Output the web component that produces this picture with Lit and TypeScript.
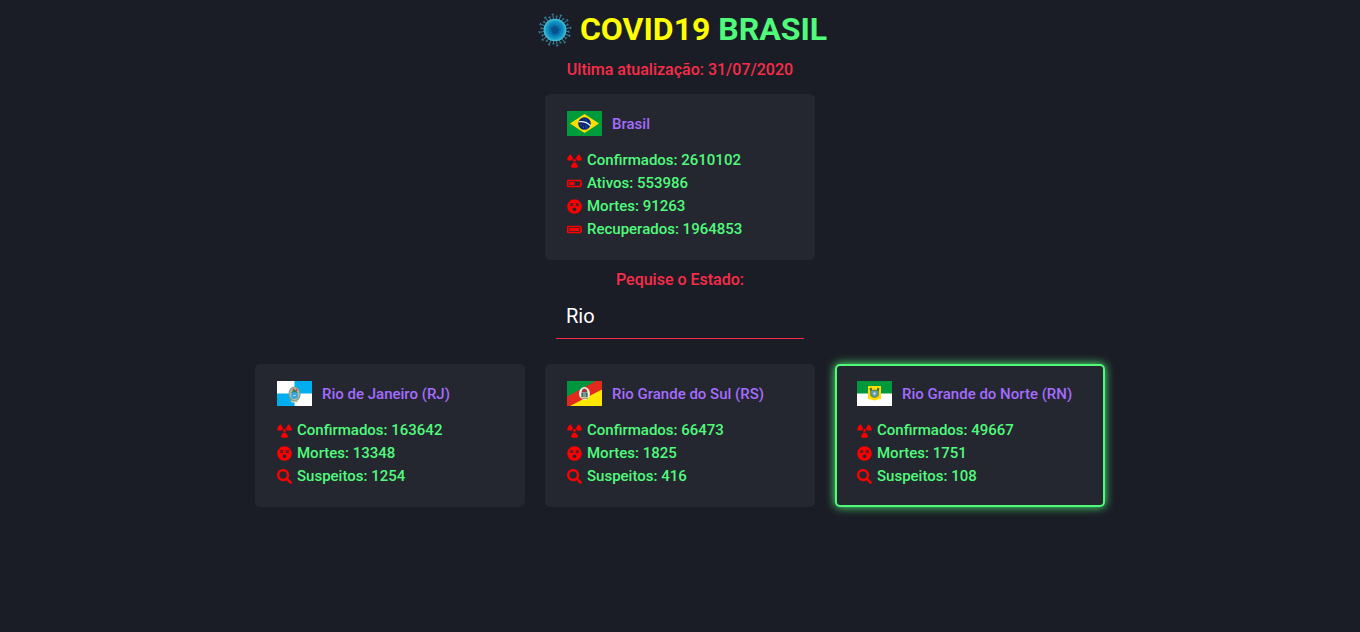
import { LitElement, html, css, svg } from "lit";
import { customElement, property, state } from "lit/decorators.js";

type Row = { icon: string; label: string; value: number };
type Place = { name: string; flag: string; rows: Row[] };

const country: Place = {
  name: "Brasil",
  flag: "br",
  rows: [
    { icon: "radiation", label: "Confirmados", value: 2610102 },
    { icon: "half", label: "Ativos", value: 553986 },
    { icon: "dizzy", label: "Mortes", value: 91263 },
    { icon: "full", label: "Recuperados", value: 1964853 },
  ],
};

const place = (name: string, flag: string, cases: number, deaths: number, suspects: number): Place => ({
  name,
  flag,
  rows: [
    { icon: "radiation", label: "Confirmados", value: cases },
    { icon: "dizzy", label: "Mortes", value: deaths },
    { icon: "search", label: "Suspeitos", value: suspects },
  ],
});

const places: Place[] = [
  place("Rio de Janeiro (RJ)", "rj", 163642, 13348, 1254),
  place("Rio Grande do Sul (RS)", "rs", 66473, 1825, 416),
  place("Rio Grande do Norte (RN)", "rn", 49667, 1751, 108),
];

const battery =
  "M544 160v64h32v64h-32v64H64V160h480m16-64H48c-26.51 0-48 21.49-48 48v224c0 26.51 21.49 48 48 48h512c26.51 0 48-21.49 48-48v-16h8c13.255 0 24-10.745 24-24V184c0-13.255-10.745-24-24-24h-8v-16c0-26.51-21.49-48-48-48z";

const icons: Record<string, { box: string; d: string }> = {
  radiation: {
    box: "0 0 496 512",
    d: "M328.2 255.8h151.6c9.1 0 16.8-7.7 16.2-16.8-5.1-75.8-44.4-142.2-102.5-184.2-7.4-5.3-17.9-2.9-22.7 4.8L290.4 188c22.6 14.3 37.8 39.2 37.8 67.8zm-37.8 67.7c-12.3 7.7-26.8 12.4-42.4 12.4-15.6 0-30-4.7-42.4-12.4L125.2 452c-4.8 7.7-2.4 18.1 5.6 22.4C165.7 493.2 205.6 504 248 504s82.3-10.8 117.2-29.6c8-4.3 10.4-14.8 5.6-22.4l-80.4-128.5zM248 303.8c26.5 0 48-21.5 48-48s-21.5-48-48-48-48 21.5-48 48 21.5 48 48 48zm-231.8-48h151.6c0-28.6 15.2-53.5 37.8-67.7L125.2 59.7c-4.8-7.7-15.3-10.2-22.7-4.8C44.4 96.9 5.1 163.3 0 239.1c-.6 9 7.1 16.7 16.2 16.7z",
  },
  half: { box: "0 0 640 512", d: battery + "m-240 96H96v128h224V192z" },
  full: { box: "0 0 640 512", d: battery + "m-48 96H96v128h416V192z" },
  dizzy: {
    box: "0 0 496 512",
    d: "M248 8C111 8 0 119 0 256s111 248 248 248 248-111 248-248S385 8 248 8zm-96 206.6l-28.7 28.7c-14.8 14.8-37.8-7.5-22.6-22.6l28.7-28.7-28.7-28.7c-15-15 7.7-37.6 22.6-22.6l28.7 28.7 28.7-28.7c15-15 37.6 7.7 22.6 22.6L174.6 192l28.7 28.7c15.2 15.2-7.9 37.4-22.6 22.6L152 214.6zM248 416c-35.3 0-64-28.7-64-64s28.7-64 64-64 64 28.7 64 64-28.7 64-64 64zm147.3-195.3c15.2 15.2-7.9 37.4-22.6 22.6L344 214.6l-28.7 28.7c-14.8 14.8-37.8-7.5-22.6-22.6l28.7-28.7-28.7-28.7c-15-15 7.7-37.6 22.6-22.6l28.7 28.7 28.7-28.7c15-15 37.6 7.7 22.6 22.6L366.6 192l28.7 28.7z",
  },
  search: {
    box: "0 0 512 512",
    d: "M505 442.7L405.3 343c-4.5-4.5-10.6-7-17-7H372c27.6-35.3 44-79.7 44-128C416 93.1 322.9 0 208 0S0 93.1 0 208s93.1 208 208 208c48.3 0 92.7-16.4 128-44v16.3c0 6.4 2.5 12.5 7 17l99.7 99.7c9.4 9.4 24.6 9.4 33.9 0l28.3-28.3c9.4-9.4 9.4-24.6.1-34zM208 336c-70.7 0-128-57.2-128-128 0-70.7 57.2-128 128-128 70.7 0 128 57.2 128 128 0 70.7-57.2 128-128 128z",
  },
};

const flags: Record<string, unknown> = {
  br: svg`
    <rect width="35" height="25" fill="#009c3b"/>
    <path d="M17.500 3L32 12.500 17.500 22 3 12.500z" fill="#ffdf00"/>
    <circle cx="17.500" cy="12.500" r="6.300" fill="#06297a"/>
    <path d="M11.600 10.800q7-1.200 12 4" fill="none" stroke="#fff" stroke-width="1.100"/>
    <g fill="#c8d2e6"><circle cx="14" cy="14" r=".4"/><circle cx="16.500" cy="16" r=".4"/><circle cx="19" cy="15" r=".4"/><circle cx="20" cy="17" r=".4"/><circle cx="19.500" cy="9" r=".3"/></g>`,
  rj: svg`
    <rect width="35" height="25" fill="#fff"/>
    <path d="M17.500 0H35v12.500H0V25h17.500z" fill="#00aeef"/>
    <ellipse cx="17.500" cy="13" rx="5.500" ry="7" fill="#b9c4a8" stroke="#7d9a83" stroke-width="1.200"/>
    <ellipse cx="17.500" cy="12.500" rx="4.300" ry="6" fill="#a9bcae"/>
    <path d="M14 12l3.500-4 3.500 4z" fill="#2f7d58"/>
    <ellipse cx="17.500" cy="14.500" rx="3.400" ry="3.600" fill="#37a6dc"/>
    <path d="M15 9.500l1.400-2.500 1 3zm3.600.5l1-3 1.200 3z" fill="#c94d50"/>
    <path d="M14 20q3.500 2 7 0" fill="none" stroke="#d6cda2" stroke-width="1.600"/>
    <path d="M16 14h3v1h-3z" fill="#a6d3e6"/>`,
  rs: svg`
    <rect width="35" height="25" fill="#e02a1c"/>
    <path d="M0 0h29L0 15.500z" fill="#009640"/>
    <path d="M35 8.500V25H3z" fill="#ffe600"/>
    <ellipse cx="17.500" cy="12.500" rx="5.500" ry="6.500" fill="#f3efe4"/>
    <path d="M14.500 10h6v6h-6z" fill="#81969a"/>
    <path d="M15 9q2.500-3 5 0v2h-5z" fill="#a33b38"/>
    <path d="M14.500 12h1.500v4h-1.500zm4.500 0h1.500v4H19z" fill="#3b7048"/>
    <path d="M14 16.500h7v1.500h-7z" fill="#ad9c78"/>`,
  rn: svg`
    <rect width="35" height="25" fill="#fff"/>
    <path d="M0 0h35v12.500H0z" fill="#009a3d"/>
    <path d="M11 5h13v13q-3 .2-6.500 1.500Q14 18.200 11 18z" fill="#ffdd00"/>
    <path d="M13 8q2 1.500 4.500.5Q20 9.500 22 8v5q0 3-4.500 4-4.500-1-4.500-4z" fill="#7b8a45"/>
    <path d="M14.500 10h6v3q-1 2.500-3 3-2-.5-3-3z" fill="#4e9fc5"/>
    <path d="M16 12.500l1.500-2 1.500 2-1.500 2z" fill="#c4d6d2"/>
    <path d="M12.500 7.500l2-1 .8 2.500-2 1zm10 0l-2-1-.8 2.500 2 1z" fill="#36704a"/>`,
};

const spikes = Array.from({ length: 24 }, (_, i) => {
  const turn = (i * Math.PI) / 12 + 0.12;
  const reach = i % 2 ? 15 : 13.2;
  const at = (r: number, a = turn) => [16 + r * Math.cos(a), 16 + r * Math.sin(a)];
  const [x1, y1] = at(10);
  const [x2, y2] = at(reach);
  const [x3, y3] = at(reach, turn - 0.08);
  const [x4, y4] = at(reach, turn + 0.08);
  return `M${x1} ${y1}L${x2} ${y2}M${x3} ${y3}L${x4} ${y4}`;
}).join("");

@customElement("covid-card")
class CovidCard extends LitElement {
  @property({ attribute: false }) place!: Place;
  @property({ type: Boolean, reflect: true }) active = false;

  static styles = css`
    :host {
      display: block;
      box-sizing: border-box;
      width: 270px;
      padding: 15px 20px 17px;
      border: 2px solid #242630;
      border-radius: 5px;
      background: #242630;
    }
    :host([active]) {
      border-color: #50fa7b;
      box-shadow: 0 0 10px #50fa7b;
    }
    .head {
      display: flex;
      align-items: center;
      gap: 10px;
      margin-bottom: 13px;
    }
    .flag {
      display: block;
      width: 35px;
      height: 25px;
    }
    .name {
      margin: 0;
      padding-top: 2px;
      color: #a66cff;
      font-size: 15px;
      font-weight: 500;
      line-height: 23px;
    }
    .rows {
      margin: 0;
      padding: 0;
      list-style: none;
    }
    .row {
      display: flex;
      align-items: center;
      gap: 5px;
      color: #50fa7b;
      font-size: 15px;
      font-weight: 500;
      line-height: 23px;
    }
    .icon {
      width: 15px;
      height: 15px;
      margin-bottom: 1px;
      fill: #f00;
    }
  `;

  render() {
    const { name, flag, rows } = this.place;
    return html`
      <div class="head">
        <svg class="flag" viewBox="0 0 35 25" aria-hidden="true">${flags[flag]}</svg>
        <h2 class="name">${name}</h2>
      </div>
      <ul class="rows">
        ${rows.map(
          (r) => html`<li class="row">
            <svg class="icon" viewBox=${icons[r.icon].box} aria-hidden="true"><path d=${icons[r.icon].d}></path></svg>
            <span>${r.label}: ${r.value}</span>
          </li>`,
        )}
      </ul>
    `;
  }
}

@customElement("app-root")
class AppRoot extends LitElement {
  @state() query = "Rio";

  static styles = css`
    :host {
      display: flex;
      flex-direction: column;
      align-items: center;
      box-sizing: border-box;
      min-height: 100vh;
      padding: 10px 20px;
      background: #1b1d26;
      font-family: Roboto, sans-serif;
    }
    .title {
      display: flex;
      align-items: center;
      gap: 8px;
      margin: 0;
      padding-left: 5px;
      color: #50fa7b;
      font-size: 32px;
      font-weight: 700;
      line-height: 38px;
    }
    .virus {
      width: 34px;
      height: 34px;
      margin-top: 2px;
    }
    .covid {
      color: #ff0;
    }
    .note {
      color: #f92c49;
      font-size: 16px;
      font-weight: 500;
      line-height: 20px;
    }
    .updated {
      margin: 12px 0 14px;
    }
    .prompt {
      margin-top: 10px;
    }
    .field {
      box-sizing: border-box;
      width: 248px;
      height: 44px;
      margin: 5px 0 25px;
      padding: 0 10px 2px;
      border: 0;
      border-bottom: 1px solid #f92c49;
      outline: 0;
      background: transparent;
      color: #fff;
      font-family: inherit;
      font-size: 20px;
    }
    .results {
      display: flex;
      flex-wrap: wrap;
      justify-content: center;
      gap: 20px;
    }
  `;

  render() {
    const found = places.filter((p) => p.name.toLowerCase().includes(this.query.toLowerCase()));
    return html`
      <h1 class="title">
        <svg class="virus" viewBox="0 0 32 32" aria-hidden="true">
          <defs>
            <radialGradient id="cell">
              <stop offset="0" stop-color="#07568d" />
              <stop offset=".5" stop-color="#0878ae" />
              <stop offset=".8" stop-color="#15a0cd" />
              <stop offset="1" stop-color="#55c5dc" />
            </radialGradient>
          </defs>
          <path d=${spikes} stroke="#347f9b" stroke-width="1" fill="none" />
          <circle cx="16" cy="16" r="10.700" fill="url(#cell)" />
          <path d="M10 12l4-3 4 2 4-1 1 6-3 5-5 2-5-4z" fill="none" stroke="#128abd" stroke-width=".8" />
          <path d="M12 14l4-2 4 3-1 4-5 1z" fill="#064d83" opacity=".7" />
        </svg>
        <span><span class="covid">COVID19</span> BRASIL</span>
      </h1>
      <p class="note updated">Ultima atualização: 31/07/2020</p>
      <covid-card .place=${country}></covid-card>
      <label class="note prompt" for="state">Pequise o Estado:</label>
      <input
        class="field"
        id="state"
        type="text"
        autocomplete="off"
        .value=${this.query}
        @input=${(e: Event) => (this.query = (e.target as HTMLInputElement).value)}
      />
      <div class="results">
        ${found.map((p) => html`<covid-card .place=${p} ?active=${p.flag === "rn"}></covid-card>`)}
      </div>
    `;
  }
}
